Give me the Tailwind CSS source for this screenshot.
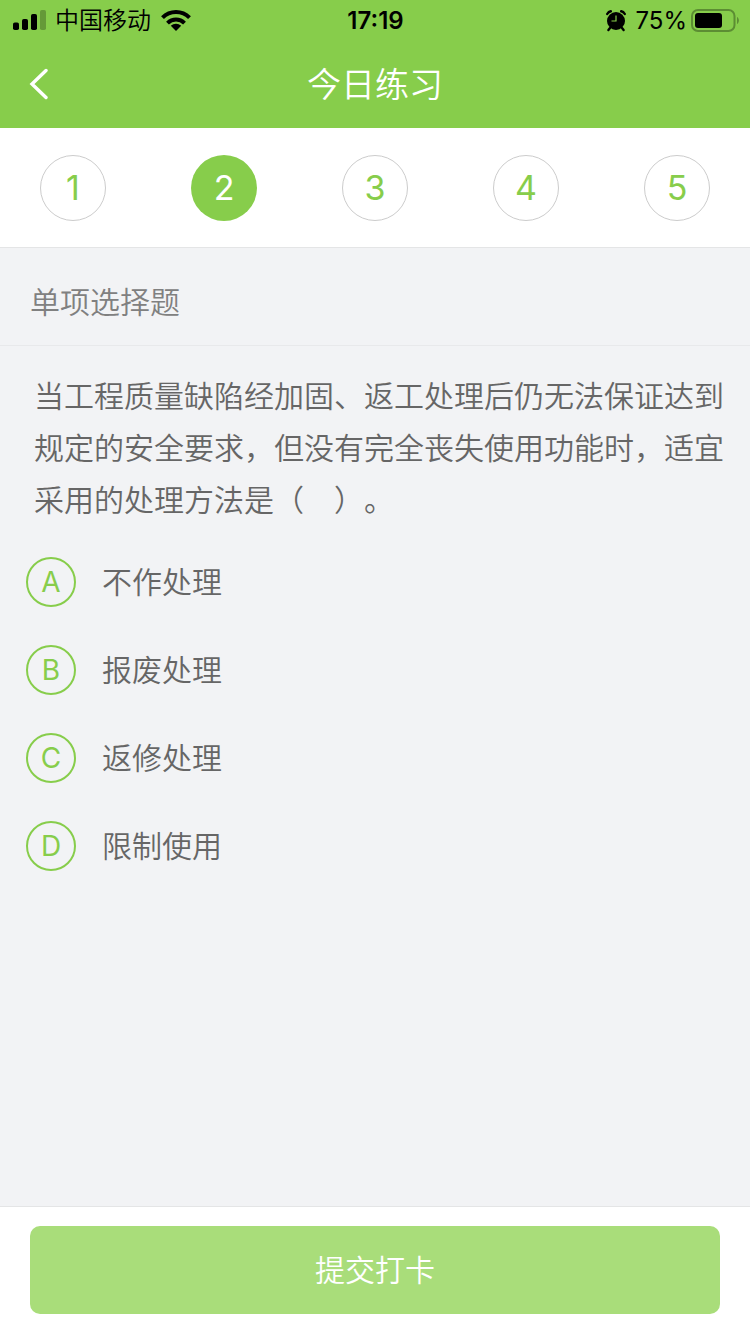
<!DOCTYPE html>
<html lang="zh-CN">
<head>
    <meta charset="UTF-8">
    <meta name="viewport" content="width=device-width, initial-scale=1.0">
    <title>今日练习</title>
    <script src="https://cdn.jsdelivr.net/npm/@tailwindcss/browser@4"></script>
</head>
<body class="bg-[#f2f3f5] min-h-screen flex flex-col font-['Inter','Noto_Sans_CJK_SC',sans-serif] font-[350] text-[#666666]">
    <header class="bg-[#87cd4b]">
        <!-- Status bar -->
        <div class="h-10 pt-px grid grid-cols-[1fr_auto_1fr] items-center pl-3 pr-[11px] text-2xl leading-10 text-black">
            <div class="flex items-center gap-[10px]">
                <div class="flex items-center gap-[9px]">
                    <svg class="w-[34px] h-[22px]" viewBox="0 0 34 22" fill="currentColor" aria-hidden="true">
                        <rect x="1" y="12.5" width="6" height="7.5" rx="1.8"/>
                        <rect x="10" y="9" width="6" height="11" rx="1.8"/>
                        <rect x="19" y="4" width="6" height="16" rx="1.8"/>
                        <rect x="28" y="0" width="6" height="20" rx="1.8" opacity=".25"/>
                    </svg>
                    <span>中国移动</span>
                </div>
                <svg class="w-[30px] h-[22px]" viewBox="0 0 30 22" fill="none" stroke="currentColor" stroke-width="4" aria-hidden="true">
                    <path d="M1.5 7.7C9 .2 21 .2 28.5 7.7"/>
                    <path d="M6.500 13.100C11.300 8.400 18.700 8.400 23.500 13.100"/>
                    <path d="M15 21l-5.200-5.200c2.900-2.700 7.500-2.700 10.400 0z" fill="currentColor" stroke="none"/>
                </svg>
            </div>
            <span class="font-semibold">17:19</span>
            <div class="flex items-center justify-end gap-1">
                <svg class="w-[22px] h-[22px] mr-1" viewBox="0 0 22 22" fill="none" stroke="currentColor" aria-hidden="true">
                    <circle cx="11" cy="11" r="9" fill="currentColor" stroke="none"/>
                    <path d="M2.200 4C3 2.600 4.200 1.600 5.800 1.300M19.800 4C19 2.600 17.800 1.600 16.200 1.300" stroke-width="2.4" stroke-linecap="round"/>
                    <path d="M5 18l-1.600 2M17 18l1.600 2" stroke-width="2.4" stroke-linecap="round"/>
                    <path d="M11 5.500v5.500H6.500" stroke="#87cd4b" stroke-width="1.2"/>
                </svg>
                <span class="font-normal">75%</span>
                <svg class="w-12 h-6" viewBox="0 0 48 24" fill="none" aria-hidden="true">
                    <rect x="1" y="1" width="42.5" height="21" rx="6" stroke="#5c8d33" stroke-width="2"/>
                    <rect x="4" y="4" width="27" height="15" rx="3" fill="#000"/>
                    <path d="M46 8c2.500 1.200 2.500 5.800 0 7z" fill="#5c8d33"/>
                </svg>
            </div>
        </div>
        <!-- Title bar -->
        <div class="h-[88px] grid grid-cols-[1fr_auto_1fr] items-center px-7 text-white">
            <button type="button" aria-label="返回" class="justify-self-start">
                <svg class="w-5 h-8" viewBox="0 0 20 32" fill="none" stroke="currentColor" stroke-width="3.4" stroke-linecap="round" aria-hidden="true">
                    <path d="M18 2.500L4 16l14 13.500"/>
                </svg>
            </button>
            <h1 class="text-[34px] font-[350]">今日练习</h1>
        </div>
    </header>

    <nav aria-label="题号" class="h-[120px] bg-white border-b border-[#e4e5e6] px-10 flex items-center justify-between text-[34px] font-normal text-[#87cd4b]">
        <button type="button" class="size-[66px] rounded-full border border-[#cccccc]">1</button>
        <button type="button" aria-current="step" class="size-[66px] rounded-full bg-[#87cd4b] text-white">2</button>
        <button type="button" class="size-[66px] rounded-full border border-[#cccccc]">3</button>
        <button type="button" class="size-[66px] rounded-full border border-[#cccccc]">4</button>
        <button type="button" class="size-[66px] rounded-full border border-[#cccccc]">5</button>
    </nav>

    <h2 class="h-[98px] border-b border-[#e8e9eb] px-[30px] pt-7 text-[30px] leading-[52px] font-[350] text-[#808080]">单项选择题</h2>

    <main class="flex-1 pt-6 px-[26px]">
        <form id="question-form">
            <p id="question" class="pl-2 text-[30px] leading-[52px] [text-spacing-trim:space-all]">当工程质量缺陷经加固、返工处理后仍无法保证达到规定的安全要求，但没有完全丧失使用功能时，适宜采用的处理方法是（　）。</p>
            <div role="radiogroup" aria-labelledby="question" class="mt-[31px] flex flex-col gap-[38px] text-[30px] leading-[50px]">
                <label class="flex items-center gap-[26px]">
                    <input type="radio" name="answer" value="A" class="sr-only">
                    <span class="size-[50px] rounded-full border-2 border-[#87cd4b] flex items-center justify-center text-[28px] font-normal text-[#87cd4b]">A</span>
                    <span>不作处理</span>
                </label>
                <label class="flex items-center gap-[26px]">
                    <input type="radio" name="answer" value="B" class="sr-only">
                    <span class="size-[50px] rounded-full border-2 border-[#87cd4b] flex items-center justify-center text-[28px] font-normal text-[#87cd4b]">B</span>
                    <span>报废处理</span>
                </label>
                <label class="flex items-center gap-[26px]">
                    <input type="radio" name="answer" value="C" class="sr-only">
                    <span class="size-[50px] rounded-full border-2 border-[#87cd4b] flex items-center justify-center text-[28px] font-normal text-[#87cd4b]">C</span>
                    <span>返修处理</span>
                </label>
                <label class="flex items-center gap-[26px]">
                    <input type="radio" name="answer" value="D" class="sr-only">
                    <span class="size-[50px] rounded-full border-2 border-[#87cd4b] flex items-center justify-center text-[28px] font-normal text-[#87cd4b]">D</span>
                    <span>限制使用</span>
                </label>
            </div>
        </form>
    </main>

    <footer class="bg-white border-t border-[#e4e5e6] px-[30px] pt-[19px] pb-5">
        <button type="submit" form="question-form" class="block w-full h-[88px] rounded-[10px] bg-[#a9dd7a] text-[30px] text-white">提交打卡</button>
    </footer>
</body>
</html>
